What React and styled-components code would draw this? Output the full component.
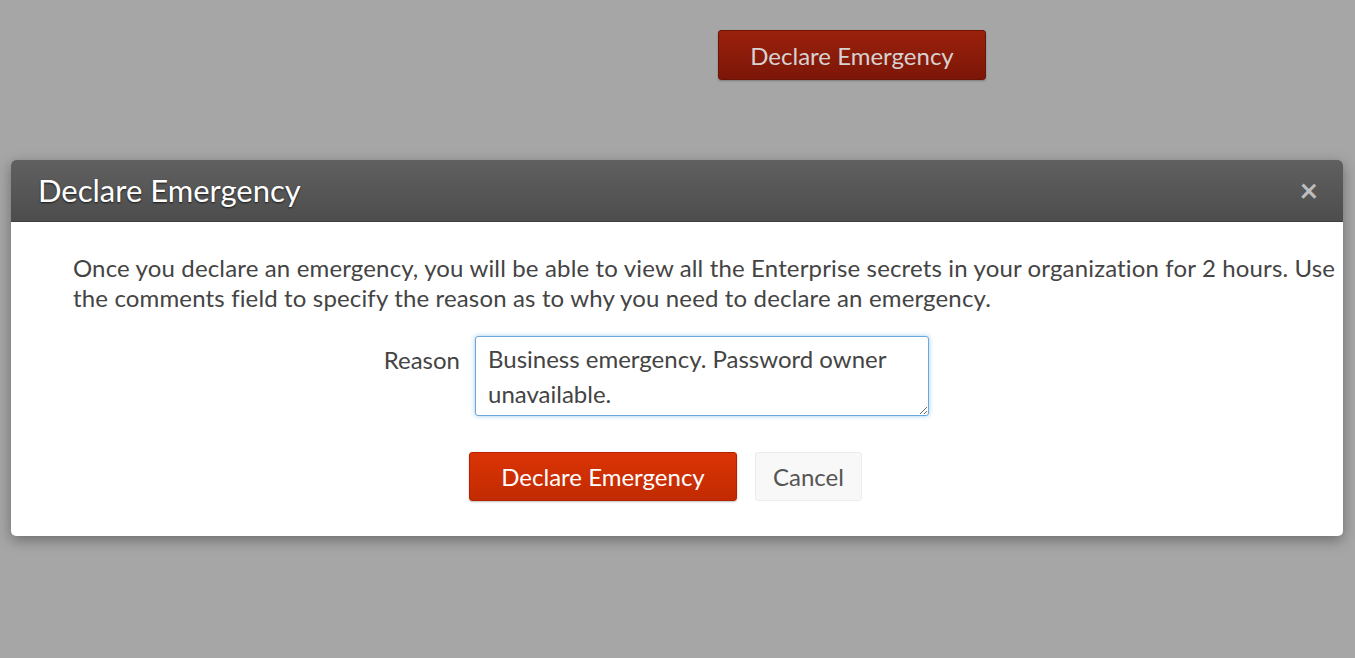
import React from "react";
import styled, { createGlobalStyle } from "styled-components";

const GlobalStyle = createGlobalStyle`
  html, body {
    margin: 0;
    padding: 0;
    background: #a6a6a6;
    font-family: Lato, "Open Sans", sans-serif;
  }
`;

const Page = styled.div`
  width: 1355px;
  height: 658px;
  background: #a6a6a6;
  overflow: hidden;
  display: flex;
  flex-direction: column;
`;

const TopBar = styled.div`
  display: flex;
  padding: 30px 0 0 718px;
  height: 160px;
  box-sizing: border-box;
`;

const DarkButton = styled.button`
  width: 268px;
  height: 50px;
  border: 1px solid #6e1405;
  border-radius: 3px;
  background: linear-gradient(#9a210c, #7c1608);
  color: #d6d2d0;
  font-family: inherit;
  font-size: 24px;
  box-shadow: 0 1px 2px rgba(0, 0, 0, 0.25);
`;

const Modal = styled.div`
  margin-left: 11px;
  width: 1332px;
  height: 376px;
  background: #fff;
  border-radius: 5px;
  box-shadow: 0 4px 14px rgba(0, 0, 0, 0.35);
  overflow: hidden;
  display: flex;
  flex-direction: column;
`;

const Header = styled.div`
  height: 62px;
  flex: none;
  box-sizing: border-box;
  display: flex;
  align-items: center;
  justify-content: space-between;
  padding: 0 25px 2px 27px;
  background: linear-gradient(#606060, #4d4d4d);
  border-bottom: 1px solid #3f3f3f;
`;

const Title = styled.h2`
  margin: 0;
  font-weight: 400;
  font-size: 31px;
  color: #fff;
  text-shadow: 0 1px 2px rgba(0, 0, 0, 0.7);
`;

const Close = styled.span`
  color: #bdbdbd;
  font-size: 32px;
  font-weight: 700;
  line-height: 1;
`;

const Body = styled.div`
  padding: 31px 0 0 62px;
  display: flex;
  flex-direction: column;
`;

const Text = styled.p`
  margin: 0;
  font-size: 24px;
  letter-spacing: 0.15px;
  line-height: 30px;
  color: #444;
`;

const Row = styled.div`
  display: flex;
  align-items: flex-start;
  margin-top: 23px;
  padding-left: 299px;
  gap: 15px;
`;

const Label = styled.label`
  width: 88px;
  text-align: right;
  padding-top: 9px;
  font-size: 24px;
  color: #444;
`;

const TextArea = styled.textarea`
  width: 454px;
  height: 80px;
  box-sizing: border-box;
  border: 1px solid #6aa8dc;
  border-radius: 3px;
  box-shadow: 0 0 5px rgba(102, 170, 230, 0.6);
  padding: 4px 12px;
  font-family: inherit;
  font-size: 24px;
  line-height: 35px;
  color: #444;
  resize: vertical;
  outline: none;
`;

const Actions = styled.div`
  display: flex;
  align-items: center;
  gap: 18px;
  margin-top: 36px;
  padding-left: 396px;
`;

const Button = styled.button`
  height: 49px;
  padding: 0 ${(p) => (p.$primary ? "30px" : "17px")};
  width: ${(p) => (p.$primary ? "268px" : "auto")};
  border-radius: 3px;
  font-family: inherit;
  font-size: 24px;
  border: 1px solid ${(p) => (p.$primary ? "#b52200" : "#ececec")};
  background: ${(p) =>
    p.$primary ? "linear-gradient(#da3406, #c22a00)" : "#f8f8f8"};
  color: ${(p) => (p.$primary ? "#fff" : "#555")};
  box-shadow: ${(p) => (p.$primary ? "0 1px 2px rgba(0,0,0,0.25)" : "none")};
`;

const App = () => {
  return (
    <Page>
      <GlobalStyle />
      <TopBar>
        <DarkButton>Declare Emergency</DarkButton>
      </TopBar>
      <Modal>
        <Header>
          <Title>Declare Emergency</Title>
          <Close>×</Close>
        </Header>
        <Body>
          <Text>
            Once you declare an emergency, you will be able to view all the
            Enterprise secrets in your organization for 2 hours. Use the
            comments field to specify the reason as to why you need to declare
            an emergency.
          </Text>
          <Row>
            <Label>Reason</Label>
            <TextArea defaultValue="Business emergency. Password owner unavailable." />
          </Row>
          <Actions>
            <Button $primary>Declare Emergency</Button>
            <Button>Cancel</Button>
          </Actions>
        </Body>
      </Modal>
    </Page>
  );
};

export default App;
